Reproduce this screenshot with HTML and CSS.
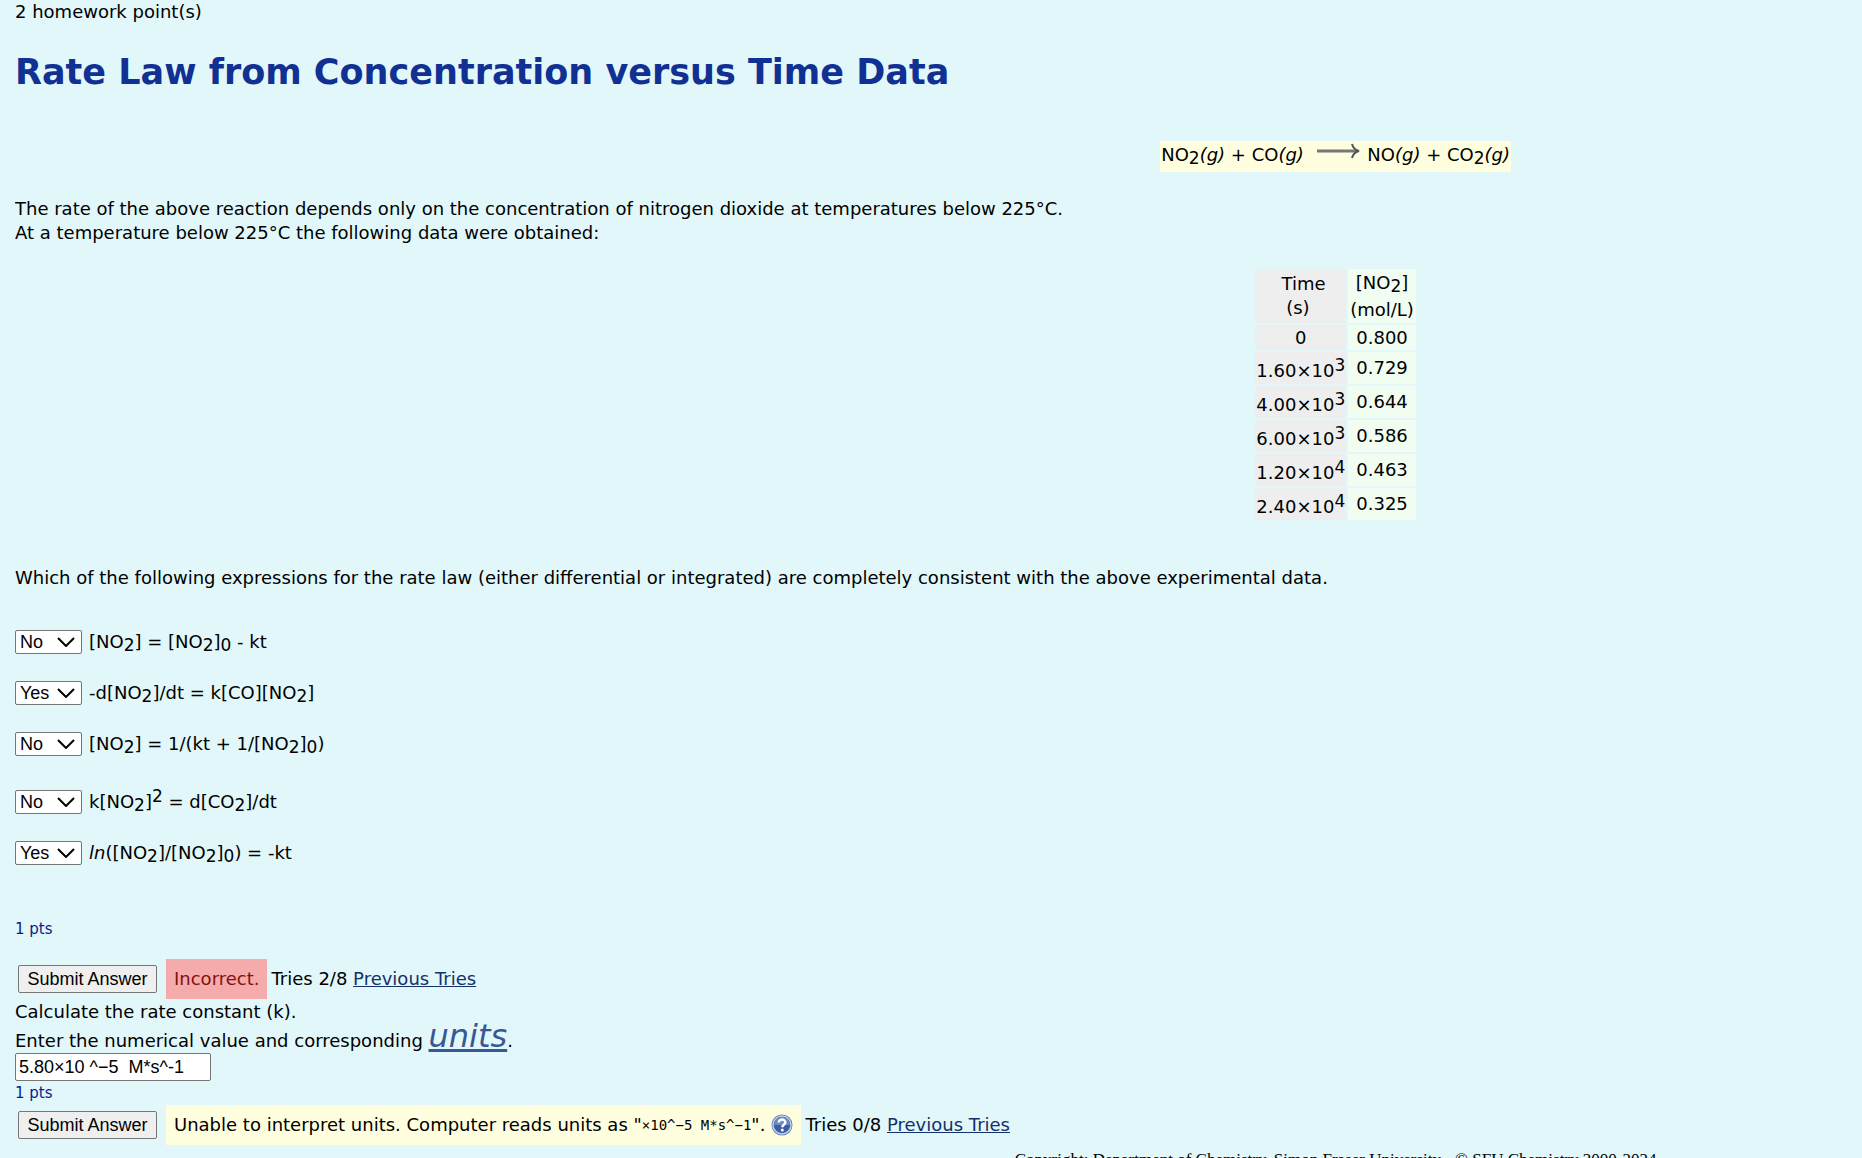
FILE: index.html
```html
<!DOCTYPE html>
<html lang="en">
<head>
    <meta charset="UTF-8">
    <meta name="viewport" content="width=device-width, initial-scale=1.0">
    <title>Rate Law from Concentration versus Time Data</title>
    <link rel="stylesheet" href="styles.css">
</head>
<body>
    <main class="problem">
        <p class="weight">2 homework point(s)</p>
        <h1>Rate Law from Concentration versus Time Data</h1>

        <!-- Reaction -->
        <div class="reaction">
            <span class="equation">NO<sub>2</sub><i>(g)</i> + CO<i>(g)</i>
                <svg class="arrow" viewBox="0 0 44 16" aria-hidden="true">
                    <path d="M1 6H42" stroke="#777" stroke-width="3"/>
                    <path d="M36 -1C37 3 39 5 43 6C39 7 37 9 36 13" fill="none" stroke="#555" stroke-width="2"/>
                </svg>
                NO<i>(g)</i> + CO<sub>2</sub><i>(g)</i></span>
        </div>

        <p>The rate of the above reaction depends only on the concentration of nitrogen dioxide at temperatures below 225°C.<br>
        At a temperature below 225°C the following data were obtained:</p>

        <!-- Data table -->
        <table class="data">
            <tr class="head"><td>&nbsp;Time<br>(s)&nbsp;</td><td class="conc">[NO<sub>2</sub>]<br>(mol/L)</td></tr>
            <tr class="first"><td>0</td><td>0.800</td></tr>
            <tr><td class="power">1.60×10<sup>3</sup></td><td>0.729</td></tr>
            <tr><td class="power">4.00×10<sup>3</sup></td><td>0.644</td></tr>
            <tr><td class="power">6.00×10<sup>3</sup></td><td>0.586</td></tr>
            <tr><td class="power">1.20×10<sup>4</sup></td><td>0.463</td></tr>
            <tr><td class="power">2.40×10<sup>4</sup></td><td>0.325</td></tr>
        </table>

        <p>Which of the following expressions for the rate law (either differential or integrated) are completely consistent with the above experimental data.</p>

        <!-- Answers -->
        <form class="part">
            <div class="options">
                <div class="option">
                    <select id="opt1"><option>Yes</option><option selected>No</option></select>
                    <label for="opt1">[NO<sub>2</sub>] = [NO<sub>2</sub>]<sub>0</sub> - kt</label>
                </div>
                <div class="option">
                    <select id="opt2"><option selected>Yes</option><option>No</option></select>
                    <label for="opt2">-d[NO<sub>2</sub>]/dt = k[CO][NO<sub>2</sub>]</label>
                </div>
                <div class="option">
                    <select id="opt3"><option>Yes</option><option selected>No</option></select>
                    <label for="opt3">[NO<sub>2</sub>] = 1/(kt + 1/[NO<sub>2</sub>]<sub>0</sub>)</label>
                </div>
                <div class="option raised">
                    <select id="opt4"><option>Yes</option><option selected>No</option></select>
                    <label for="opt4">k[NO<sub>2</sub>]<sup>2</sup> = d[CO<sub>2</sub>]/dt</label>
                </div>
                <div class="option">
                    <select id="opt5"><option selected>Yes</option><option>No</option></select>
                    <label for="opt5"><i>ln</i>([NO<sub>2</sub>]/[NO<sub>2</sub>]<sub>0</sub>) = -kt</label>
                </div>
            </div>
            <p class="pts">1 pts</p>
            <div class="status">
                <button type="button">Submit Answer</button>
                <span class="incorrect">Incorrect.</span>
                <span>Tries 2/8 <a href="#">Previous Tries</a></span>
            </div>
        </form>

        <form class="part">
            <label class="question" for="rate">Calculate the rate constant (k).<br>
            Enter the numerical value and corresponding <a class="units" href="#">units</a>.</label>
            <input id="rate" type="text" value="5.80×10 ^−5  M*s^-1">
            <p class="pts">1 pts</p>
            <div class="status">
                <button type="button">Submit Answer</button>
                <span class="warning">Unable to interpret units. Computer reads units as "<code>×10^−5 M*s^−1</code>".
                    <a href="#" class="help" aria-label="Help"><svg viewBox="0 0 22 22">
                        <circle cx="11" cy="11" r="10.5" fill="#5d7db8"/>
                        <circle cx="11" cy="11" r="9" fill="#3d5f9f" stroke="#c5d3ea" stroke-width="1.4"/>
                        <path d="M3 11A8 8 0 0 1 19 11Z" fill="#6d8bc2"/>
                        <path d="M7.8 8.6C7.8 4.5 14.5 4.6 14.3 8.6C14.2 10.8 11.3 10.8 11.3 13.2" fill="none" stroke="#fff" stroke-width="2.4"/>
                        <circle cx="11.3" cy="16" r="1.5" fill="#fff"/>
                    </svg></a></span>
                <span>Tries 0/8 <a href="#">Previous Tries</a></span>
            </div>
        </form>

        <footer>Copyright: Department of Chemistry, Simon Fraser University - © SFU Chemistry 2000-2024</footer>
    </main>
</body>
</html>
```
FILE: styles.css
```css
* {
    margin: 0;
    padding: 0;
    box-sizing: border-box;
}

html {
    overflow: hidden;
}

body {
    margin-left: 15px;
    font-family: Verdana, "DejaVu Sans", sans-serif;
    font-size: 18px;
    line-height: 24px;
    color: #000;
    background-color: #e1f7f9;
}

/* The sheet is wider than the window, centred blocks sit right of the middle */
.problem {
    width: 143%;
}

h1 {
    margin: 24px 0 45px;
    font-size: 35px;
    line-height: 48px;
    color: #113093;
}

a {
    color: #13316b;
}

sub, sup {
    font-size: 17px;
    line-height: 0;
}

sub {
    vertical-align: -3px;
}

sup {
    vertical-align: 6px;
}

/* Reaction */
.reaction {
    display: flex;
    justify-content: center;
    margin-bottom: 25px;
}

.equation {
    padding: 2px 1px 5px;
    background-color: #ffffdf;
}

.arrow {
    width: 44px;
    height: 16px;
    margin: 0 2px 0 6px;
    overflow: visible;
}

/* Data table */
.data {
    margin: 22px auto 44px;
    border-spacing: 2px;
    text-align: center;
}

.data td {
    height: 32px;
    padding: 0 1px;
    background-color: #f0fdf0;
}

.data td:first-child {
    background-color: #eee;
}

.data .power {
    padding-top: 5px;
}

.data .first td {
    height: 25px;
}

.data .head td {
    height: 54px;
}

.data .conc {
    padding: 0 2px;
    line-height: 27px;
}

/* Answers */
.options {
    display: flex;
    flex-direction: column;
    gap: 27px;
    margin: 40px 0 52px;
}

.option {
    display: flex;
    align-items: center;
    gap: 7px;
}

.raised {
    margin-top: 7px;
}

select, input, button {
    font-family: Arial, "Liberation Sans", sans-serif;
    font-size: 18px;
    color: #000;
    border: 1px solid #767676;
    border-radius: 2px;
}

select {
    width: 67px;
    height: 24px;
    padding-left: 4px;
    appearance: none;
    background: #fff url("data:image/svg+xml,%3Csvg xmlns='http://www.w3.org/2000/svg' width='18' height='10'%3E%3Cpath d='M1 1L9 9L17 1' fill='none' stroke='black' stroke-width='2'/%3E%3C/svg%3E") no-repeat right 6px center;
}

.pts {
    font-size: 15px;
    color: #0c1c8c;
}

.status {
    display: flex;
    align-items: center;
    gap: 4px;
    padding-left: 3px;
}

.part:first-of-type .status {
    margin: 18px 0 1px;
}

button {
    width: 139px;
    height: 28px;
    margin-right: 5px;
    background-color: #efefef;
}

.incorrect, .warning {
    padding: 8px;
}

.incorrect {
    color: #82120f;
    background-color: #f5abab;
}

.warning {
    display: flex;
    align-items: center;
    background-color: #ffffdf;
}

code {
    font-family: "DejaVu Sans Mono", monospace;
    font-size: 14px;
}

.help {
    height: 22px;
    margin-left: 6px;
}

.help svg {
    width: 22px;
    height: 22px;
}

.question {
    display: block;
}

.units {
    font-size: 32px;
    font-style: italic;
    color: #3a5795;
}

input {
    display: block;
    width: 196px;
    height: 28px;
    padding: 0 3px;
    background-color: #fff;
}

/* Footer */
footer {
    margin-top: 3px;
    font-family: "Times New Roman", "Liberation Serif", serif;
    font-size: 17px;
    text-align: center;
}
```
